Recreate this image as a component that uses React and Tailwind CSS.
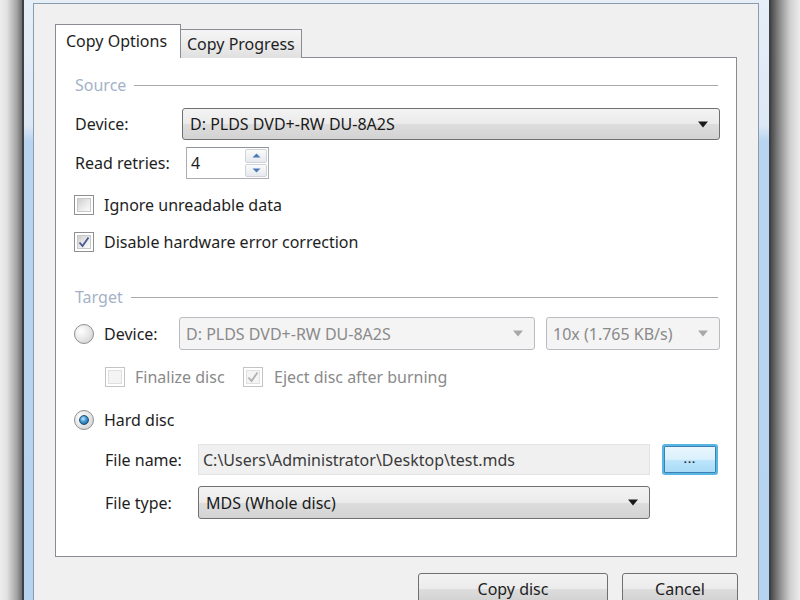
const Arrow = ({ disabled }) => (
  <svg width="12" height="7" viewBox="0 0 12 7" className="shrink-0">
    <path d="M1 0.5 L11 0.5 L6 6.5 Z" fill={disabled ? '#a8a8a8' : '#1a1a1a'} />
  </svg>
)

const Combo = ({ text, className, disabled }) => (
  <div
    className={
      disabled
        ? `flex items-center justify-between pl-[6px] pr-[10px] rounded-[3px] border border-[#b8bcc0] bg-[#f4f4f4] text-[#8a8a8a] ${className}`
        : `flex items-center justify-between pl-[7px] pr-[10px] rounded-[3px] border border-[#707070] bg-[linear-gradient(to_bottom,#f3f3f3_0%,#ebebeb_50%,#dddddd_51%,#d3d3d3_100%)] text-[#1a1a1a] ${className}`
    }
  >
    <span className="whitespace-nowrap leading-normal">{text}</span>
    <Arrow disabled={disabled} />
  </div>
)

const Check = ({ checked, disabled }) => (
  <div className={`w-[20px] h-[20px] shrink-0 border ${disabled ? 'border-[#c4c4c4]' : 'border-[#8e8f8f]'} bg-white p-[2px]`}>
    <div
      className={`w-full h-full flex items-center justify-center border ${
        disabled
          ? 'border-[#e0e0e0] bg-[#f4f4f4]'
          : 'border-[#c8c8c8] bg-[linear-gradient(135deg,#cfcfcf_0%,#e8e8e8_50%,#fbfbfb_100%)]'
      }`}
    >
      {checked && (
        <svg width="12" height="12" viewBox="0 0 12 12">
          <path
            d="M1.5 6.5 L4.5 10 L10.5 1.5"
            fill="none"
            stroke={disabled ? '#b0b0b0' : '#4a5894'}
            strokeWidth="1.8"
          />
        </svg>
      )}
    </div>
  </div>
)

const Radio = ({ checked }) => (
  <div className="w-[20px] h-[20px] shrink-0 rounded-full border border-[#8e8f8f] bg-[radial-gradient(circle_at_35%_35%,#ffffff_0%,#e4e4e4_55%,#c9c9c9_100%)] flex items-center justify-center">
    {checked && (
      <div className="w-[10px] h-[10px] rounded-full border border-[#1c4f7a] bg-[radial-gradient(circle_at_40%_35%,#bfe6fb_0%,#3d97cf_45%,#0f4e82_100%)]" />
    )}
  </div>
)

const SpinArrow = ({ up }) => (
  <svg width="9" height="5" viewBox="0 0 9 5">
    <path d={up ? 'M0.5 4.5 L8.5 4.5 L4.5 0.5 Z' : 'M0.5 0.5 L8.5 0.5 L4.5 4.5 Z'} fill="#4f78b8" />
  </svg>
)

const GroupHeader = ({ title }) => (
  <div className="h-[26px] flex items-center gap-[8px] pl-[19px] pr-[18px]">
    <span className="text-[#a4b2c8] whitespace-nowrap">{title}</span>
    <div className="flex-1 h-px bg-[#a9a9a9]" />
  </div>
)

export default function App() {
  return (
    <div className="w-[800px] h-[600px] overflow-hidden flex bg-[#ececec] font-['Noto_Sans',sans-serif] text-[16px] leading-none text-[#1e1e1e] whitespace-nowrap">
      {/* left shadow */}
      <div className="w-[22px] h-full shrink-0 bg-[linear-gradient(to_right,#ededed_0%,#e2e2e2_30%,#a5a5a5_75%,#6e6e6e_100%)]" />

      {/* window frame */}
      <div className="w-[749px] h-[620px] shrink-0 flex border-x-2 border-[#3e4247] pl-[9px] pr-[10px] pt-[3px] bg-[linear-gradient(to_bottom,#e6eef8_0px,#dde8f5_125px,#b8d4f1_142px,#b6d3f0_100%)]">
        <div className="flex-1 flex flex-col border border-[#8a9bb0] bg-[#f0f0f0] px-[21px] pt-[20px]">
          {/* tabs */}
          <div className="flex items-end h-[34px] relative z-10">
            <div className="h-[34px] w-[126px] border border-b-0 border-[#898c95] bg-white flex items-center pl-[10px] pb-[2px] text-[16px] leading-normal">
              Copy Options
            </div>
            <div className="h-[29px] w-[122px] -ml-px border border-b-0 border-[#898c95] bg-[linear-gradient(to_bottom,#f5f5f5_0%,#ececec_50%,#e0e0e0_100%)] flex items-center pl-[6px] text-[16px] leading-normal">
              Copy Progress
            </div>
          </div>

          {/* panel */}
          <div className="-mt-px h-[500px] border border-[#898c95] bg-white flex flex-col pt-[14px]">
            <GroupHeader title="Source" />

            <div className="mt-[10px] h-[32px] flex items-center pl-[19px] pr-[16px]">
              <span className="w-[107px]">Device:</span>
              <Combo text="D: PLDS DVD+-RW DU-8A2S" className="flex-1 h-[32px]" />
            </div>

            <div className="mt-[7px] h-[32px] flex items-center pl-[19px]">
              <span className="w-[111px]">Read retries:</span>
              <div className="w-[83px] h-[32px] flex border border-[#abadb3] border-t-[#8f939c] bg-white">
                <span className="flex-1 flex items-center pl-[4px]">4</span>
                <div className="w-[24px] flex flex-col gap-px p-px">
                  <div className="flex-1 flex items-center justify-center rounded-[2px] border border-[#d0d4da] bg-[linear-gradient(to_bottom,#fafafa,#e6e9ee)]">
                    <SpinArrow up />
                  </div>
                  <div className="flex-1 flex items-center justify-center rounded-[2px] border border-[#d0d4da] bg-[linear-gradient(to_bottom,#fafafa,#e6e9ee)]">
                    <SpinArrow />
                  </div>
                </div>
              </div>
            </div>

            <div className="mt-[13px] h-[26px] flex items-center gap-[10px] pl-[18px]">
              <Check />
              <span>Ignore unreadable data</span>
            </div>

            <div className="mt-[11px] h-[26px] flex items-center gap-[10px] pl-[18px]">
              <Check checked />
              <span>Disable hardware error correction</span>
            </div>

            <div className="mt-[29px]">
              <GroupHeader title="Target" />
            </div>

            <div className="mt-[7px] h-[33px] flex items-center pl-[18px] pr-[16px]">
              <Radio />
              <span className="ml-[10px] w-[75px]">Device:</span>
              <Combo disabled text="D: PLDS DVD+-RW DU-8A2S" className="w-[356px] h-[33px]" />
              <Combo disabled text="10x (1.765 KB/s)" className="ml-[11px] flex-1 h-[33px]" />
            </div>

            <div className="mt-[14px] h-[26px] flex items-center pl-[49px] text-[#8a8a8a]">
              <Check disabled />
              <span className="ml-[10px] w-[108px]">Finalize disc</span>
              <Check disabled checked />
              <span className="ml-[11px]">Eject disc after burning</span>
            </div>

            <div className="mt-[17px] h-[26px] flex items-center gap-[10px] pl-[18px]">
              <Radio checked />
              <span>Hard disc</span>
            </div>

            <div className="mt-[11px] h-[31px] flex items-center pl-[49px]">
              <span className="w-[93px]">File name:</span>
              <div className="w-[452px] h-[31px] flex items-center pl-[4px] border border-[#e2e3e5] bg-[#f0f0f0] text-[#3a3a3a]">
                C:\Users\Administrator\Desktop\test.mds
              </div>
              <div className="ml-[12px] w-[56px] h-[31px] rounded-[3px] border-2 border-[#58b6e4] shadow-[inset_0_0_0_1px_#3c7fb1] bg-[linear-gradient(to_bottom,#eaf6fd_0%,#d9f0fc_50%,#bee6fd_51%,#a7d9f5_100%)] flex items-end justify-center pb-[9px] text-[11px] font-bold tracking-[1px]">
                ...
              </div>
            </div>

            <div className="mt-[11px] h-[33px] flex items-center pl-[49px]">
              <span className="w-[93px]">File type:</span>
              <Combo text="MDS (Whole disc)" className="w-[452px] h-[33px]" />
            </div>
          </div>

          {/* buttons */}
          <div className="mt-[16px] flex justify-end gap-[14px] -mr-px">
            <div className="w-[190px] h-[32px] rounded-[3px] border border-[#707070] bg-[linear-gradient(to_bottom,#f3f3f3_0%,#ebebeb_50%,#dddddd_51%,#cfcfcf_100%)] flex items-center justify-center">
              Copy disc
            </div>
            <div className="w-[116px] h-[32px] rounded-[3px] border border-[#707070] bg-[linear-gradient(to_bottom,#f3f3f3_0%,#ebebeb_50%,#dddddd_51%,#cfcfcf_100%)] flex items-center justify-center">
              Cancel
            </div>
          </div>
        </div>
      </div>

      {/* right shadow */}
      <div className="flex-1 h-full bg-[linear-gradient(to_right,#4a4a4a_0%,#8c8c8c_30%,#cfcfcf_65%,#ececec_100%)]" />
    </div>
  )
}
